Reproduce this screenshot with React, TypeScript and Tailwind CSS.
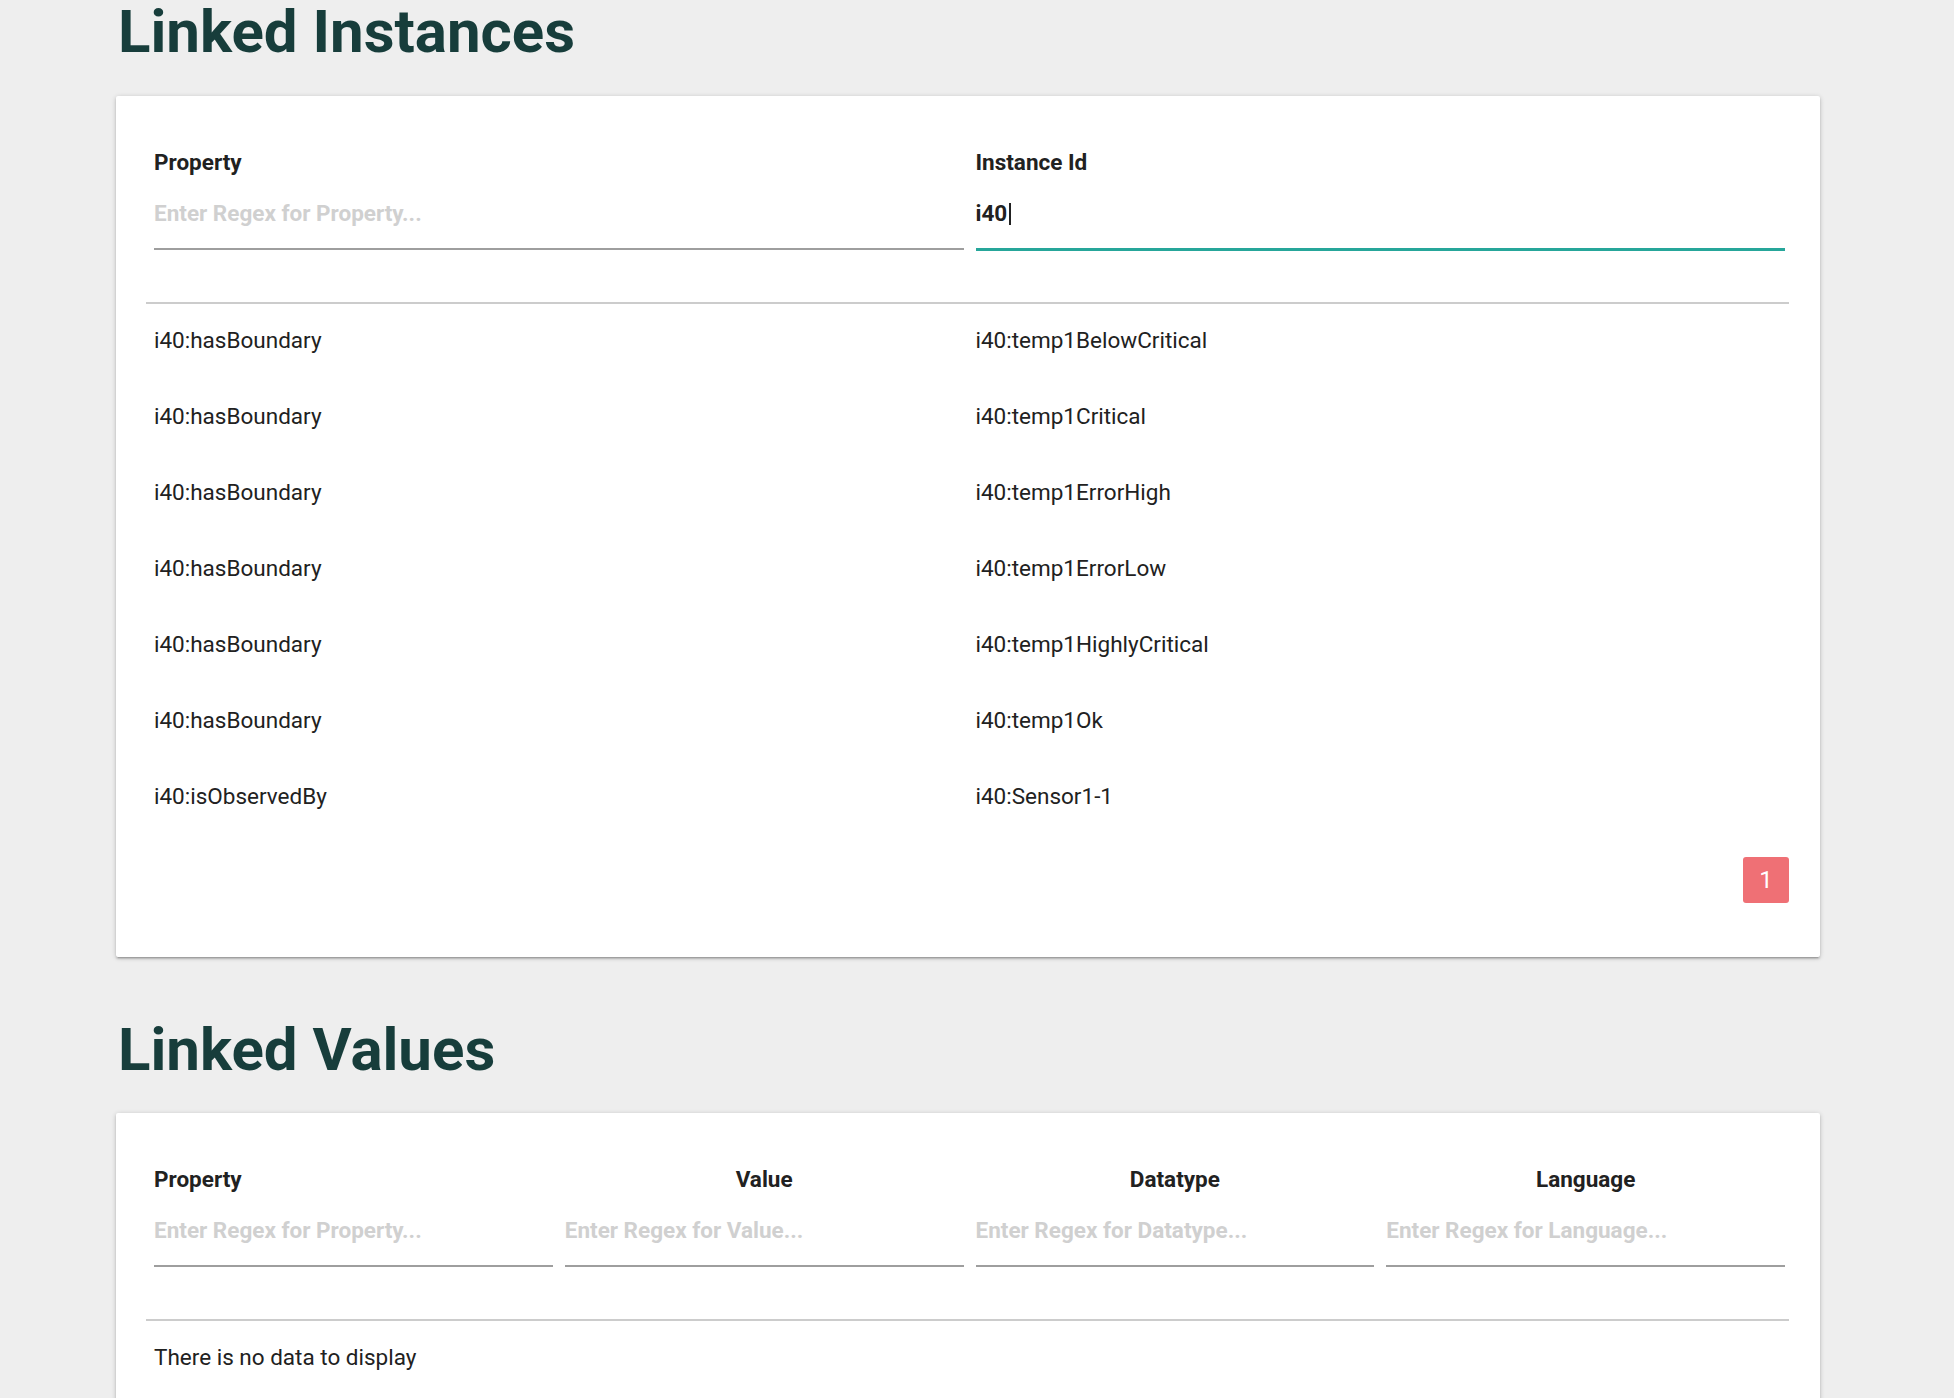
import { useState } from 'react'

const instanceRows: [string, string][] = [
  ['i40:hasBoundary', 'i40:temp1BelowCritical'],
  ['i40:hasBoundary', 'i40:temp1Critical'],
  ['i40:hasBoundary', 'i40:temp1ErrorHigh'],
  ['i40:hasBoundary', 'i40:temp1ErrorLow'],
  ['i40:hasBoundary', 'i40:temp1HighlyCritical'],
  ['i40:hasBoundary', 'i40:temp1Ok'],
  ['i40:isObservedBy', 'i40:Sensor1-1'],
]

interface FilterFieldProps {
  label: string
  placeholder: string
  value?: string
  onChange?: (val: string) => void
  centered?: boolean
  focused?: boolean
}

function FilterField({ label, placeholder, value, onChange, centered = false, focused = false }: FilterFieldProps) {
  return (
    <div className="pl-2 pr-1">
      <div
        className={`h-[26px] text-[22.5px] leading-[26px] font-bold text-[#212121] ${centered ? 'text-center' : 'text-left'}`}
      >
        {label}
      </div>
      <div className="relative">
        <input
          value={value ?? ''}
          onChange={e => onChange?.(e.target.value)}
          placeholder={placeholder}
          spellCheck={false}
          className={`block h-[75px] w-full bg-transparent pt-[2px] text-[22.5px] font-bold text-[#212121] outline-none placeholder:text-[#d0d0d0] border-b-2 ${
            focused ? 'border-[#26a69a] shadow-[0_1px_0_0_#26a69a]' : 'border-[#9e9e9e]'
          }`}
        />
        {focused && <span className="pointer-events-none absolute left-[33px] top-[28px] h-[22px] w-[2px] bg-[#212121]" />}
      </div>
    </div>
  )
}

function Card({ children, className = '' }: { children: React.ReactNode; className?: string }) {
  return (
    <section
      className={`rounded-[2px] bg-white pl-[30px] pr-[31px] pt-[53px] shadow-[0_2px_2px_0_rgba(0,0,0,0.14),0_3px_1px_-2px_rgba(0,0,0,0.12),0_1px_5px_0_rgba(0,0,0,0.2)] ${className}`}
    >
      {children}
    </section>
  )
}

function Heading({ children, className = '' }: { children: React.ReactNode; className?: string }) {
  return (
    <h1 className={`pl-[2px] text-[60px] leading-[60px] font-bold text-[#173d3b] ${className}`}>{children}</h1>
  )
}

export default function App() {
  const [instanceId, setInstanceId] = useState('i40')
  const [property, setProperty] = useState('')

  return (
    <div className="min-h-screen bg-[#eeeeee] font-[Roboto,sans-serif] pb-[40px]">
      <div className="ml-[116px] w-[1704px] pt-[2px]">
        <Heading>Linked Instances</Heading>

        <Card className="mt-[34px] pb-[54px]">
          <div className="grid grid-cols-2 border-b-2 border-[#cccccc] pb-[52px]">
            <FilterField label="Property" placeholder="Enter Regex for Property..." value={property} onChange={setProperty} />
            <FilterField label="Instance Id" placeholder="Enter Regex for Instance..." value={instanceId} onChange={setInstanceId} focused />
          </div>

          {instanceRows.map(([prop, id], i) => (
            <div key={i} className="grid h-[76px] grid-cols-2 items-center pb-[3px] text-[22.5px] text-[#212121]">
              <div className="pl-2 pr-1">{prop}</div>
              <div className="pl-2 pr-1">{id}</div>
            </div>
          ))}

          <div className="mt-[21px] flex justify-end">
            <button className="flex h-[46px] w-[46px] items-center justify-center rounded-[3px] bg-[#ef7075] text-[24px] text-white">
              1
            </button>
          </div>
        </Card>

        <Heading className="mt-[63px]">Linked Values</Heading>

        <Card className="mt-[33px] pb-[60px]">
          <div className="grid grid-cols-4 border-b-2 border-[#cccccc] pb-[52px]">
            <FilterField label="Property" placeholder="Enter Regex for Property..." />
            <FilterField label="Value" placeholder="Enter Regex for Value..." centered />
            <FilterField label="Datatype" placeholder="Enter Regex for Datatype..." centered />
            <FilterField label="Language" placeholder="Enter Regex for Language..." centered />
          </div>
          <div className="flex h-[76px] items-center pb-[3px] pl-2 text-[22.5px] text-[#212121]">There is no data to display</div>
        </Card>
      </div>
    </div>
  )
}
